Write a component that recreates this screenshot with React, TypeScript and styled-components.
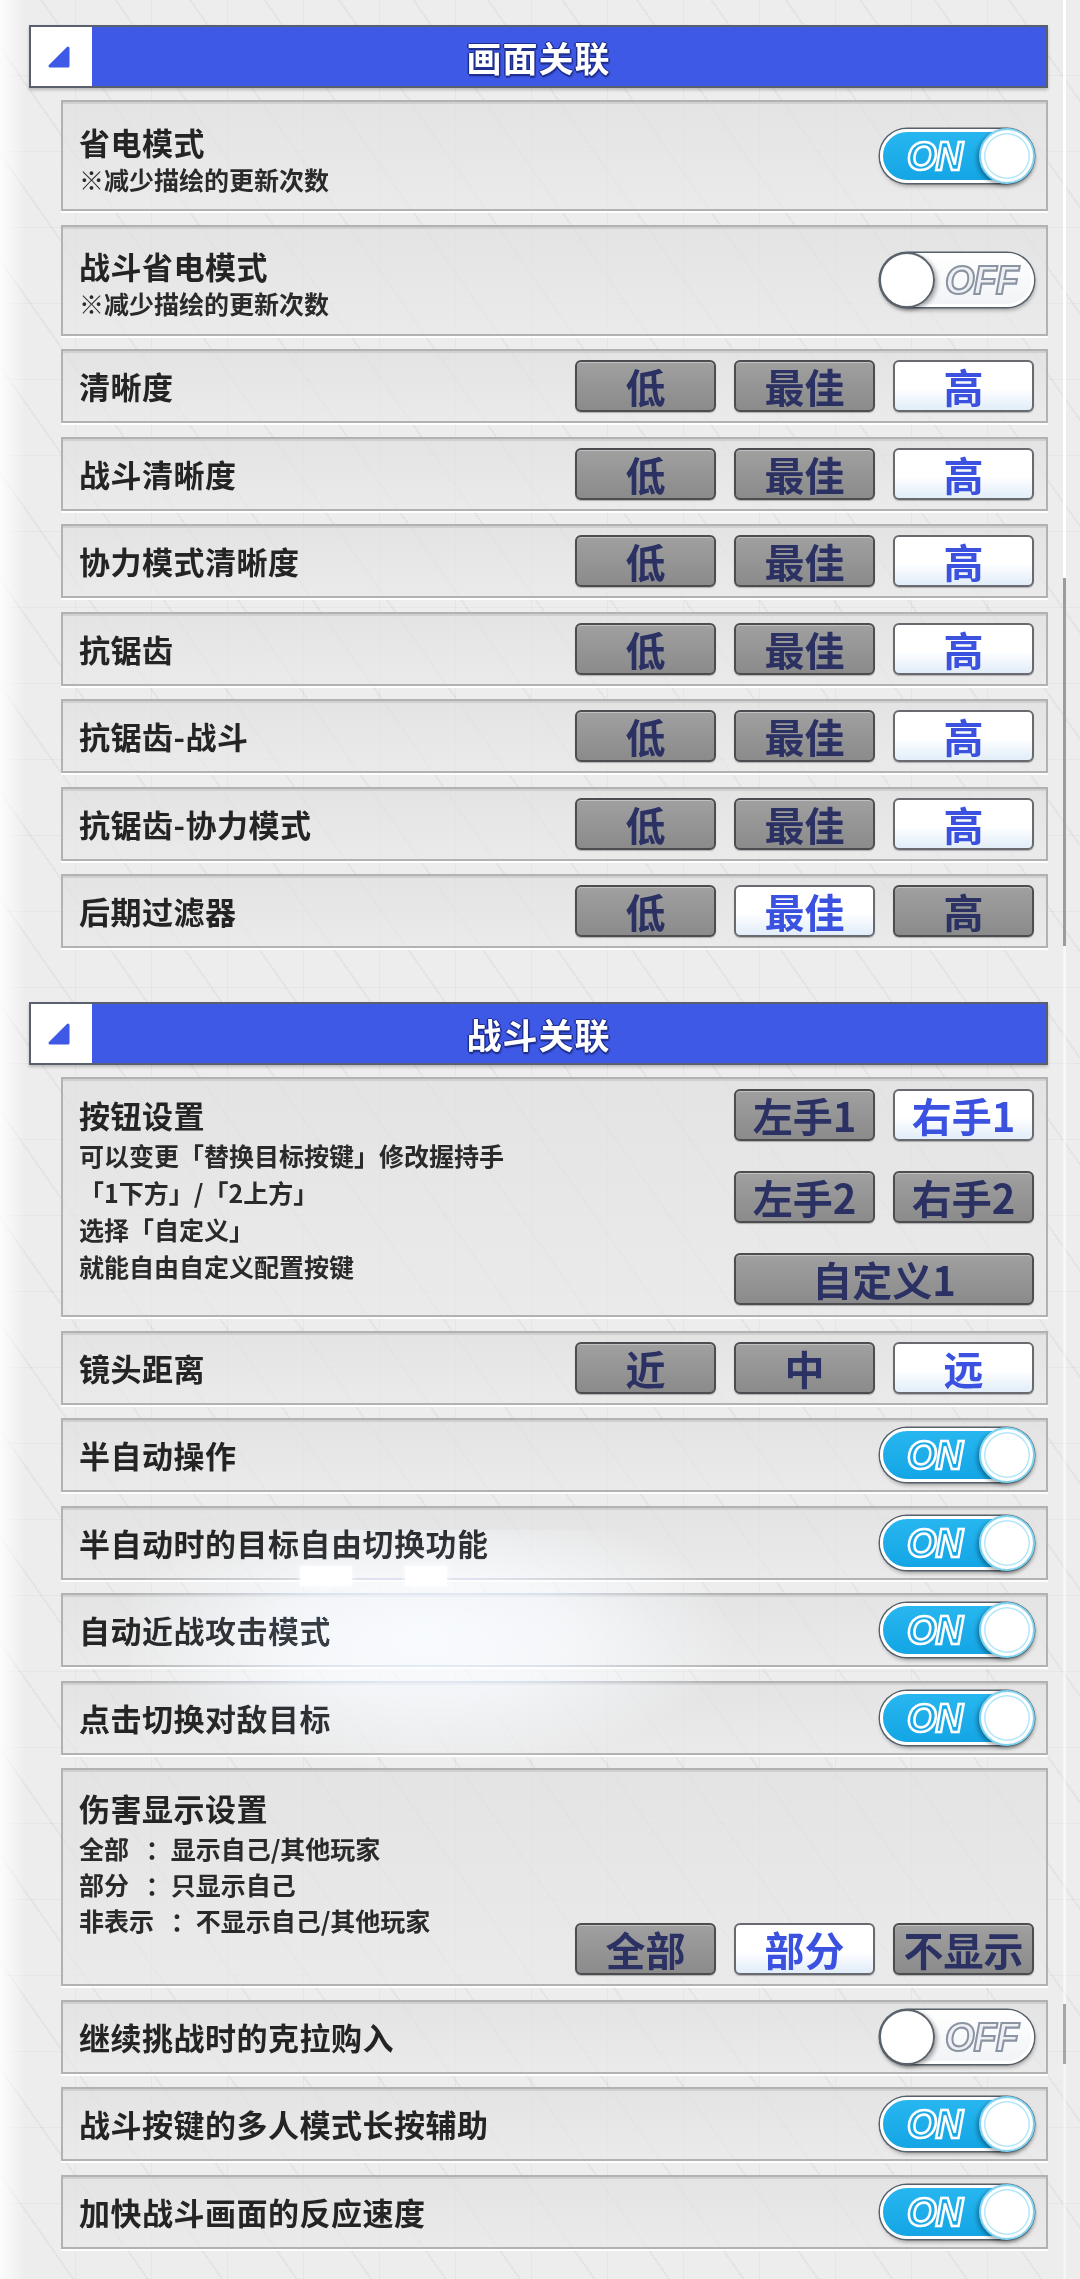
import React from "react";
import styled, { createGlobalStyle } from "styled-components";

const GlobalStyle = createGlobalStyle`
  html, body { margin: 0; padding: 0; }
  body {
    background: #eeeeee;
    font-family: "Noto Sans CJK SC", "Noto Sans", sans-serif;
  }
  * { box-sizing: border-box; }
`;

const Page = styled.div`
  position: relative;
  width: 1080px;
  min-height: 2279px;
  padding: 25px 32px 0 29px;
  overflow: hidden;
  isolation: isolate;
  display: flex;
  flex-direction: column;
  gap: 54px;
  background-color: #ededed;
  background-image:
    linear-gradient(90deg, rgba(255, 255, 255, 0.85) 0, rgba(255, 255, 255, 0) 26px),
    repeating-linear-gradient(55deg, rgba(0, 0, 0, 0) 0 59px, rgba(0, 0, 0, 0.04) 59px 61px),
    repeating-linear-gradient(90deg, rgba(0, 0, 0, 0) 0 75px, rgba(0, 0, 0, 0.035) 75px 76px),
    repeating-linear-gradient(180deg, rgba(0, 0, 0, 0) 0 75px, rgba(0, 0, 0, 0.03) 75px 76px);
`;

const Section = styled.section`
  display: flex;
  flex-direction: column;
`;

const HeaderBar = styled.div`
  display: grid;
  grid-template-columns: 61px 1fr 61px;
  height: 63px;
  background: #3f59e7;
  border: 2px solid #5a5f6e;
  box-shadow: 0 2px 3px rgba(0, 0, 0, 0.22);
`;

const HeaderCap = styled.div`
  display: flex;
  align-items: center;
  justify-content: center;
  padding-right: 6px;
  background: #ffffff;
`;

const HeaderTitle = styled.h2`
  margin: 0;
  display: flex;
  align-items: center;
  justify-content: center;
  font-family: "Noto Sans CJK SC", sans-serif;
  font-size: 35px;
  font-weight: 700;
  letter-spacing: 1px;
  color: #ffffff;
  text-shadow:
    -1.5px 0 0 #1f2f8e, 1.5px 0 0 #1f2f8e, 0 -1.5px 0 #1f2f8e, 0 1.5px 0 #1f2f8e,
    1px 2px 2px rgba(10, 20, 80, 0.6);
`;

const RowList = styled.div`
  display: flex;
  flex-direction: column;
  gap: 13.5px;
  margin: 12px 0 0 32px;
`;

const Row = styled.div<{ $align?: string; $minHeight?: number }>`
  display: flex;
  align-items: ${(p) => p.$align ?? "center"};
  justify-content: space-between;
  min-height: ${(p) => p.$minHeight ?? 74}px;
  padding: 0 12px 0 16px;
  background: linear-gradient(180deg, rgba(224, 224, 224, 0.72), rgba(233, 233, 233, 0.68));
  border: 2px solid #b2b2b2;
  box-shadow: inset 0 2px 0 #d0d0d0, 0 2px 0 rgba(255, 255, 255, 0.9);
`;

const TextBlock = styled.div<{ $padTop?: number; $noteLine?: number; $noteGap?: number; $top?: boolean }>`
  display: flex;
  flex-direction: column;
  align-self: ${(p) => (p.$top ? "flex-start" : "auto")};
  padding-top: ${(p) => p.$padTop ?? 0}px;
  white-space: pre;
  & > p:first-of-type {
    margin-top: ${(p) => p.$noteGap ?? 0}px;
  }
  & > p {
    line-height: ${(p) => p.$noteLine ?? 36}px;
  }
`;

const Title = styled.div`
  font-size: 31px;
  font-weight: 700;
  line-height: 38px;
  letter-spacing: 0.5px;
  color: #242424;
`;

const Note = styled.p`
  margin: 0;
  font-size: 25px;
  font-weight: 700;
  color: #2a2a2a;
`;

const ChoiceGroup = styled.div<{ $bottom?: number }>`
  display: flex;
  gap: 18px;
  margin-bottom: ${(p) => p.$bottom ?? 0}px;
`;

const ChoiceGrid = styled.div`
  display: grid;
  grid-template-columns: 141px 141px;
  gap: 30px 18px;
  margin: 10px 0;
`;

const Choice = styled.div<{ $active?: boolean; $wide?: boolean }>`
  grid-column: ${(p) => (p.$wide ? "1 / span 2" : "auto")};
  width: ${(p) => (p.$wide ? "300px" : "141px")};
  height: 52px;
  display: flex;
  align-items: center;
  justify-content: center;
  border-radius: 6px;
  border: 2px solid ${(p) => (p.$active ? "#686a70" : "#4c4d50")};
  background: ${(p) =>
    p.$active
      ? "linear-gradient(180deg, #ffffff 0%, #ffffff 55%, #e1edf9 100%)"
      : "linear-gradient(180deg, #a0a0a0 0%, #939393 60%, #8b8b8b 100%)"};
  box-shadow: inset 0 1px 0 rgba(255, 255, 255, 0.35), 0 1px 1px rgba(0, 0, 0, 0.25);
  font-size: 40px;
  font-weight: 700;
  line-height: 1;
  color: ${(p) => (p.$active ? "#3a52df" : "#2b3163")};
  white-space: nowrap;
`;

const Switch = styled.div<{ $on: boolean }>`
  position: relative;
  flex: none;
  width: 154px;
  height: 54px;
  display: flex;
  align-items: center;
  justify-content: ${(p) => (p.$on ? "flex-start" : "flex-end")};
  padding: ${(p) => (p.$on ? "0 0 0 24px" : "0 13px 0 0")};
  border-radius: 27px;
  border: 3px solid #ffffff;
  background: ${(p) =>
    p.$on
      ? "linear-gradient(180deg, #27b6ef 0%, #14a5e5 100%)"
      : "linear-gradient(180deg, #ffffff 0%, #f1f3f6 100%)"};
  box-shadow: 0 0 0 1.5px #56606a, 1px 3px 4px rgba(0, 0, 0, 0.35);
`;

const Knob = styled.span<{ $on: boolean }>`
  position: absolute;
  top: -4px;
  ${(p) => (p.$on ? "right: -4px;" : "left: -4px;")}
  width: 56px;
  height: 56px;
  border-radius: 50%;
  background: radial-gradient(circle at 50% 42%, #ffffff 62%, #eef5f9 100%);
  border: 2px solid ${(p) => (p.$on ? "#7fd2f0" : "#5a636c")};
  box-shadow: ${(p) =>
    p.$on
      ? "inset 0 0 0 3px #ffffff, inset 0 0 0 4.5px #b6e7f8, -2px 2px 4px rgba(0, 0, 0, 0.35)"
      : "inset 0 0 0 2px #ffffff, 2px 2px 4px rgba(0, 0, 0, 0.35)"};
`;

const SwitchText = styled.span<{ $on: boolean }>`
  display: inline-block;
  font-family: "Liberation Sans", Arial, sans-serif;
  font-size: 38px;
  font-weight: 700;
  font-style: italic;
  line-height: 1;
  letter-spacing: -1px;
  transform: scaleY(1.08);
  color: ${(p) => (p.$on ? "#18a8e7" : "#eef0f3")};
  -webkit-text-stroke: ${(p) => (p.$on ? "2.5px #ffffff" : "2px #8b94a3")};
`;

const Glow = styled.div`
  position: absolute;
  left: 130px;
  top: 1530px;
  width: 640px;
  height: 250px;
  pointer-events: none;
  mix-blend-mode: overlay;
  background: radial-gradient(ellipse 50% 55% at 46% 42%, rgba(222, 236, 255, 1) 0%, rgba(222, 236, 255, 0.75) 45%, rgba(222, 236, 255, 0) 100%);
`;

const Sparkle = styled.div<{ $left: number; $width: number }>`
  position: absolute;
  top: 1566px;
  left: ${(p) => p.$left}px;
  width: ${(p) => p.$width}px;
  height: 20px;
  background: #ffffff;
  box-shadow: 0 0 6px rgba(255, 255, 255, 0.9);
`;

const ScrollRail = styled.div`
  position: absolute;
  top: 0;
  left: 1063px;
  width: 3px;
  height: 2279px;
  pointer-events: none;
  background: linear-gradient(
    180deg,
    #ffffff 0,
    #ffffff 578px,
    #9c9c9c 578px,
    #9c9c9c 946px,
    rgba(255, 255, 255, 0.6) 946px,
    rgba(255, 255, 255, 0.6) 2004px,
    #a6a6a6 2004px,
    #a6a6a6 2064px,
    rgba(255, 255, 255, 0.5) 2064px
  );
`;

const Corner = () => (
  <svg width="24" height="24" viewBox="0 0 24 24">
    <path d="M21 3 L21 21 L3 21 Z" fill="#3f59e7" stroke="#3f59e7" strokeWidth="3" strokeLinejoin="round" />
  </svg>
);

const Header = ({ title }: { title: string }) => (
  <HeaderBar>
    <HeaderCap>
      <Corner />
    </HeaderCap>
    <HeaderTitle>{title}</HeaderTitle>
    <span />
  </HeaderBar>
);

const Toggle = ({ on }: { on: boolean }) => (
  <Switch $on={on}>
    <SwitchText $on={on}>{on ? "ON" : "OFF"}</SwitchText>
    <Knob $on={on} />
  </Switch>
);

const Choices = ({ items, active, bottom }: { items: string[]; active: number; bottom?: number }) => (
  <ChoiceGroup $bottom={bottom}>
    {items.map((label, i) => (
      <Choice key={label} $active={i === active}>
        {label}
      </Choice>
    ))}
  </ChoiceGroup>
);

const quality = ["低", "最佳", "高"];

type SimpleRow =
  | { kind: "toggle"; title: string; on: boolean }
  | { kind: "choice"; title: string; items: string[]; active: number };

const SimpleSetting = ({ row }: { row: SimpleRow }) => (
  <Row>
    <Title>{row.title}</Title>
    {row.kind === "toggle" ? <Toggle on={row.on} /> : <Choices items={row.items} active={row.active} />}
  </Row>
);

const displayRows: SimpleRow[] = [
  { kind: "choice", title: "清晰度", items: quality, active: 2 },
  { kind: "choice", title: "战斗清晰度", items: quality, active: 2 },
  { kind: "choice", title: "协力模式清晰度", items: quality, active: 2 },
  { kind: "choice", title: "抗锯齿", items: quality, active: 2 },
  { kind: "choice", title: "抗锯齿-战斗", items: quality, active: 2 },
  { kind: "choice", title: "抗锯齿-协力模式", items: quality, active: 2 },
  { kind: "choice", title: "后期过滤器", items: quality, active: 1 },
];

const battleRowsA: SimpleRow[] = [
  { kind: "choice", title: "镜头距离", items: ["近", "中", "远"], active: 2 },
  { kind: "toggle", title: "半自动操作", on: true },
  { kind: "toggle", title: "半自动时的目标自由切换功能", on: true },
  { kind: "toggle", title: "自动近战攻击模式", on: true },
  { kind: "toggle", title: "点击切换对敌目标", on: true },
];

const battleRowsB: SimpleRow[] = [
  { kind: "toggle", title: "继续挑战时的克拉购入", on: false },
  { kind: "toggle", title: "战斗按键的多人模式长按辅助", on: true },
  { kind: "toggle", title: "加快战斗画面的反应速度", on: true },
];

const SaverSetting = ({ title, on }: { title: string; on: boolean }) => (
  <Row $minHeight={111}>
    <TextBlock $padTop={8}>
      <Title>{title}</Title>
      <Note>※减少描绘的更新次数</Note>
    </TextBlock>
    <Toggle on={on} />
  </Row>
);

export default function App() {
  return (
    <>
      <GlobalStyle />
      <Page>
        <Section>
          <Header title="画面关联" />
          <RowList>
            <SaverSetting title="省电模式" on={true} />
            <SaverSetting title="战斗省电模式" on={false} />
            {displayRows.map((row) => (
              <SimpleSetting key={row.title} row={row} />
            ))}
          </RowList>
        </Section>

        <Section>
          <Header title="战斗关联" />
          <RowList>
            <Row $align="flex-start">
              <TextBlock $padTop={17} $noteLine={37} $noteGap={3}>
                <Title>按钮设置</Title>
                <Note>可以变更「替换目标按键」修改握持手</Note>
                <Note>「1下方」/「2上方」</Note>
                <Note>选择「自定义」</Note>
                <Note>就能自由自定义配置按键</Note>
              </TextBlock>
              <ChoiceGrid>
                <Choice>左手1</Choice>
                <Choice $active>右手1</Choice>
                <Choice>左手2</Choice>
                <Choice>右手2</Choice>
                <Choice $wide>自定义1</Choice>
              </ChoiceGrid>
            </Row>
            {battleRowsA.map((row) => (
              <SimpleSetting key={row.title} row={row} />
            ))}
            <Row $align="flex-end" $minHeight={218}>
              <TextBlock $padTop={19} $noteLine={36} $noteGap={3} $top>
                <Title>伤害显示设置</Title>
                <Note>{"全部\u2002\u2006：显示自己/其他玩家"}</Note>
                <Note>{"部分\u2002\u2006：只显示自己"}</Note>
                <Note>{"非表示\u2002\u2006：不显示自己/其他玩家"}</Note>
              </TextBlock>
              <Choices items={["全部", "部分", "不显示"]} active={1} bottom={9} />
            </Row>
            {battleRowsB.map((row) => (
              <SimpleSetting key={row.title} row={row} />
            ))}
          </RowList>
        </Section>

        <Glow />
        <Sparkle $left={300} $width={52} />
        <Sparkle $left={405} $width={42} />
        <ScrollRail />
      </Page>
    </>
  );
}
